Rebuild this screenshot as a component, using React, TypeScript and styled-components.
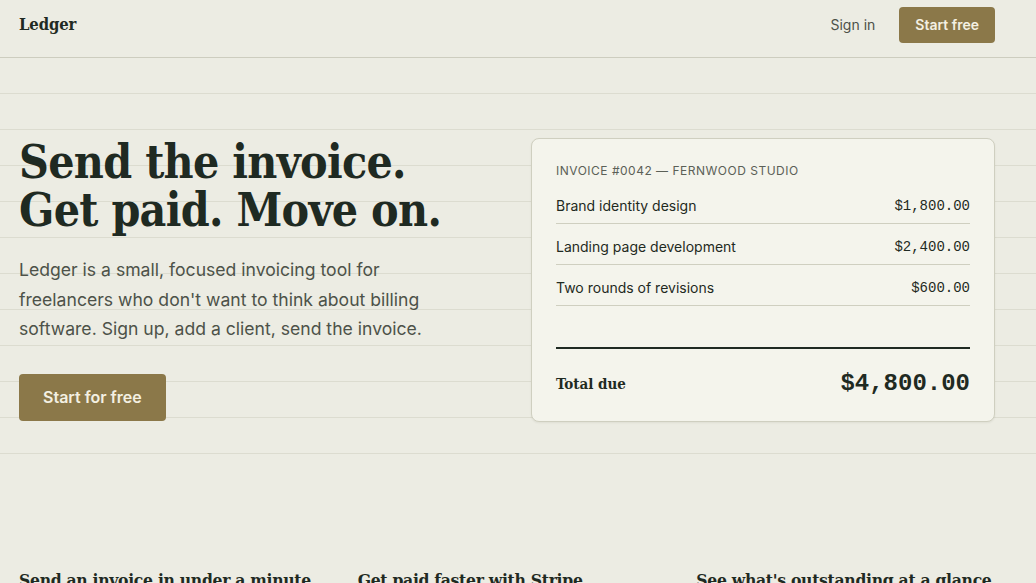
import React from 'react';
import styled, { createGlobalStyle } from 'styled-components';

const serif = `"DejaVu Serif Condensed", "DejaVu Serif", Georgia, serif`;
const sans = `Inter, "Noto Sans", Arial, sans-serif`;
const mono = `"Liberation Mono", "DejaVu Sans Mono", monospace`;

const GlobalStyle = createGlobalStyle`
  * {
    margin: 0;
    padding: 0;
    box-sizing: border-box;
  }
  body {
    background: #ecece3;
    color: #1f2a22;
    font-family: ${sans};
    overflow: hidden;
  }
`;

const Header = styled.header`
  height: 58px;
  display: flex;
  align-items: center;
  justify-content: space-between;
  padding: 0 41px 8px 19px;
  border-bottom: 1px solid #cdcdbf;
`;

const Logo = styled.div`
  font-family: ${serif};
  font-weight: 700;
  font-size: 16.5px;
  letter-spacing: -0.1px;
`;

const Nav = styled.nav`
  display: flex;
  align-items: center;
  gap: 24px;
`;

const NavLink = styled.a`
  font-size: 14px;
  color: #4c5149;
  text-decoration: none;
`;

const Button = styled.button<{ $large?: boolean }>`
  background: #8b7849;
  color: #f4f0e2;
  border: none;
  border-radius: 4px;
  font-family: ${sans};
  font-weight: 600;
  font-size: ${(p) => (p.$large ? '16px' : '14px')};
  height: ${(p) => (p.$large ? '47px' : '36px')};
  padding: ${(p) => (p.$large ? '0 24px' : '0 16px')};
  cursor: pointer;
`;

// ruled-paper backdrop: a faint line every 36px
const Hero = styled.section`
  height: 396px;
  padding: 80px 41px 0 19px;
  display: grid;
  grid-template-columns: 1fr 464px;
  column-gap: 48px;
  align-items: start;
  background-image: repeating-linear-gradient(
    to bottom,
    transparent 0,
    transparent 35px,
    #dcdcd0 35px,
    #dcdcd0 36px
  );
`;

const Pitch = styled.div`
  display: flex;
  flex-direction: column;
`;

const Headline = styled.h1`
  font-family: ${serif};
  font-weight: 700;
  font-size: 46px;
  line-height: 48px;
  letter-spacing: -0.7px;
  color: #1f2a22;
`;

const Lead = styled.p`
  margin-top: 21px;
  max-width: 440px;
  font-size: 17.6px;
  line-height: 29.5px;
  color: #4d5249;
`;

const CtaRow = styled.div`
  margin-top: 30px;
`;

const Card = styled.div`
  background: #f4f4ec;
  border: 1px solid #cfcfc0;
  border-radius: 8px;
  box-shadow: 0 1px 2px rgba(60, 60, 40, 0.08);
  padding: 24px 24px 23px;
`;

const CardLabel = styled.div`
  font-size: 12px;
  line-height: 16px;
  letter-spacing: 0.5px;
  text-transform: uppercase;
  color: #5b6057;
  margin-bottom: 4px;
`;

const Line = styled.div`
  display: flex;
  justify-content: space-between;
  align-items: center;
  padding: 14px 0 8px;
  border-bottom: 1px solid #cfcfc0;
  font-size: 14px;
  line-height: 18px;
  color: #1f2a22;
`;

const Amount = styled.span<{ $total?: boolean }>`
  font-family: ${mono};
  font-size: ${(p) => (p.$total ? '24px' : '14px')};
  font-weight: ${(p) => (p.$total ? 700 : 400)};
  line-height: ${(p) => (p.$total ? '28px' : '18px')};
  color: #1f2a22;
`;

const TotalRow = styled.div`
  margin-top: 41px;
  border-top: 2px solid #1f2a22;
  padding-top: 21px;
  display: flex;
  justify-content: space-between;
  align-items: center;
`;

const TotalLabel = styled.span`
  font-family: ${serif};
  font-size: 15px;
  font-weight: 700;
`;

const Features = styled.section`
  display: grid;
  grid-template-columns: repeat(3, 1fr);
  gap: 40px;
  padding: 114px 41px 0 19px;
`;

const FeatureTitle = styled.h3`
  font-family: ${serif};
  font-weight: 700;
  font-size: 17.4px;
  line-height: 24px;
  letter-spacing: -0.3px;
  white-space: nowrap;
  color: #1f2a22;
`;

const items = [
  { name: 'Brand identity design', amount: '$1,800.00' },
  { name: 'Landing page development', amount: '$2,400.00' },
  { name: 'Two rounds of revisions', amount: '$600.00' },
];

const features = [
  'Send an invoice in under a minute',
  'Get paid faster with Stripe',
  "See what's outstanding at a glance",
];

export default function App() {
  return (
    <>
      <GlobalStyle />
      <Header>
        <Logo>Ledger</Logo>
        <Nav>
          <NavLink href="#">Sign in</NavLink>
          <Button>Start free</Button>
        </Nav>
      </Header>

      <Hero>
        <Pitch>
          <Headline>
            Send the invoice.
            <br />
            Get paid. Move on.
          </Headline>
          <Lead>
            Ledger is a small, focused invoicing tool for freelancers who don't want to think
            about billing software. Sign up, add a client, send the invoice.
          </Lead>
          <CtaRow>
            <Button $large>Start for free</Button>
          </CtaRow>
        </Pitch>

        <Card>
          <CardLabel>Invoice #0042 — Fernwood Studio</CardLabel>
          {items.map((it) => (
            <Line key={it.name}>
              <span>{it.name}</span>
              <Amount>{it.amount}</Amount>
            </Line>
          ))}
          <TotalRow>
            <TotalLabel>Total due</TotalLabel>
            <Amount $total>$4,800.00</Amount>
          </TotalRow>
        </Card>
      </Hero>

      <Features>
        {features.map((f) => (
          <FeatureTitle key={f}>{f}</FeatureTitle>
        ))}
      </Features>
    </>
  );
}
